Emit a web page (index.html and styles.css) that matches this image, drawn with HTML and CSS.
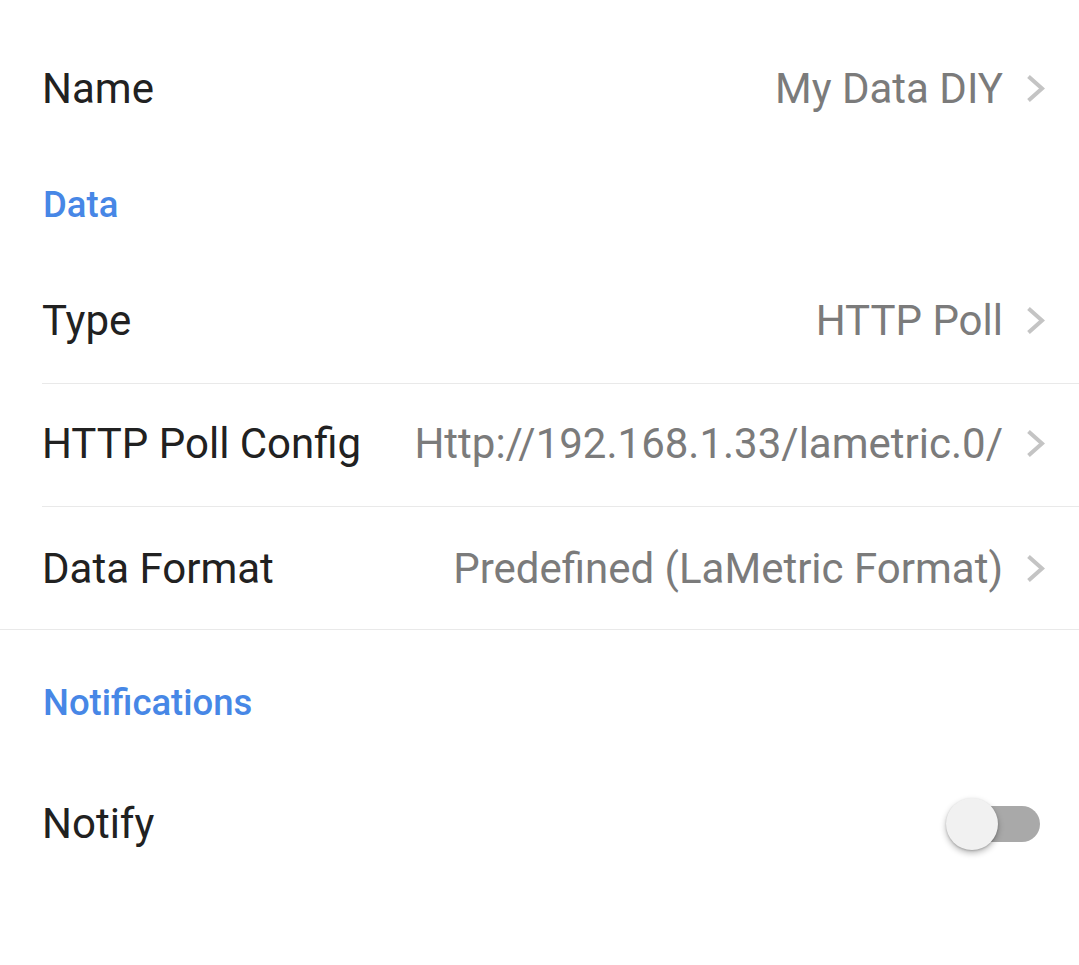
FILE: index.html
```html
<!DOCTYPE html>
<html>
<head>
<meta charset="utf-8">
<link rel="stylesheet" href="styles.css">
</head>
<body>
<div class="page">
  <div class="row row-first">
    <span class="label">Name</span>
    <span class="value">My Data DIY</span>
    <svg class="chev" viewBox="0 0 19 29"><path d="M2.5 2.5 L16 14.5 L2.5 26.5" fill="none" stroke="#c4c4c4" stroke-width="4"/></svg>
  </div>

  <div class="header header-data">Data</div>
  <div class="section">
    <div class="row row-div">
      <span class="label">Type</span>
      <span class="value">HTTP Poll</span>
      <svg class="chev" viewBox="0 0 19 29"><path d="M2.5 2.5 L16 14.5 L2.5 26.5" fill="none" stroke="#c4c4c4" stroke-width="4"/></svg>
    </div>
    <div class="row row-div">
      <span class="label">HTTP Poll Config</span>
      <span class="value">Http://192.168.1.33/lametric.0/</span>
      <svg class="chev" viewBox="0 0 19 29"><path d="M2.5 2.5 L16 14.5 L2.5 26.5" fill="none" stroke="#c4c4c4" stroke-width="4"/></svg>
    </div>
    <div class="row">
      <span class="label">Data Format</span>
      <span class="value">Predefined (LaMetric Format)</span>
      <svg class="chev" viewBox="0 0 19 29"><path d="M2.5 2.5 L16 14.5 L2.5 26.5" fill="none" stroke="#c4c4c4" stroke-width="4"/></svg>
    </div>
  </div>

  <div class="header header-notif">Notifications</div>
  <div class="row row-toggle">
    <span class="label">Notify</span>
    <div class="switch">
      <div class="track"></div>
      <div class="thumb"></div>
    </div>
  </div>
</div>
</body>
</html>
```
FILE: styles.css
```css
html, body {
  margin: 0;
  padding: 0;
  background: #ffffff;
}
body {
  font-family: Roboto, "Noto Sans", sans-serif;
}
.page {
  padding-top: 28px;
  width: 1079px;
}
.row {
  display: flex;
  align-items: center;
  height: 122px;
  margin-left: 42px;
  padding-right: 34px;
  box-sizing: border-box;
}
.row-first {
  height: 123px;
  padding-bottom: 2px;
}
.row-div {
  height: 123px;
  padding-bottom: 3px;
  border-bottom: 1px solid #e9e9e9;
}
.label {
  font-size: 42px;
  color: #212121;
  flex: 0 0 auto;
}
.value {
  margin-left: auto;
  font-size: 42px;
  color: #7b7b7b;
  white-space: nowrap;
}
.chev {
  width: 19px;
  height: 29px;
  margin-left: 23px;
  flex: 0 0 auto;
}
.header {
  font-size: 36.5px;
  font-weight: 500;
  color: #4787e6;
  line-height: 42px;
  padding-left: 43px;
}
.header-data {
  padding-top: 33px;
  padding-bottom: 35px;
}
.section {
  border-bottom: 1px solid #e9e9e9;
}
.header-notif {
  padding-top: 52px;
  padding-bottom: 38px;
}
.row-toggle {
  height: 123px;
  padding-right: 39px;
}
.switch {
  margin-left: auto;
  position: relative;
  width: 94px;
  height: 54px;
}
.track {
  position: absolute;
  right: 0;
  top: 9px;
  width: 88px;
  height: 36px;
  border-radius: 18px;
  background: #a9a9a9;
}
.thumb {
  position: absolute;
  left: 0;
  top: 1px;
  width: 52px;
  height: 52px;
  border-radius: 50%;
  background: #f1f1f1;
  box-shadow: 0 3px 6px rgba(0,0,0,0.28), 0 1px 2px rgba(0,0,0,0.18);
}
```
